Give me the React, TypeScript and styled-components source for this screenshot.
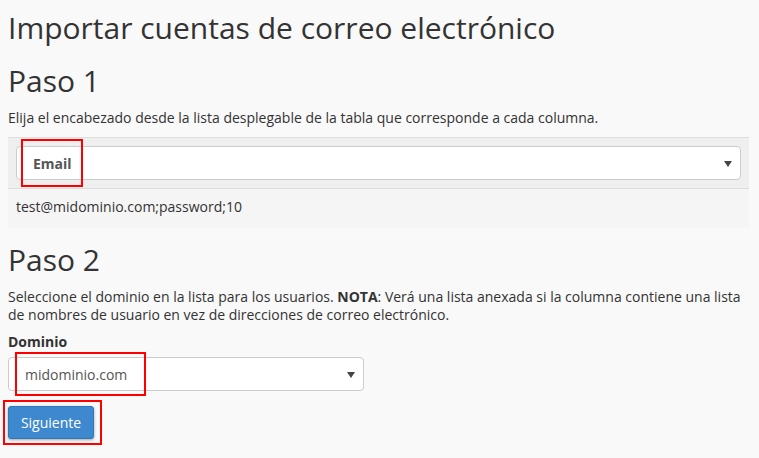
import React from "react";
import styled, { createGlobalStyle } from "styled-components";

const GlobalStyle = createGlobalStyle`
  html, body { margin: 0; padding: 0; }
  body {
    background: #f9f9f9;
    font-family: "Open Sans", "Liberation Sans", sans-serif;
    color: #333;
    font-size: 14px;
  }
`;

const Page = styled.div`
  padding: 0 10px 20px 8px;
`;

const Title = styled.h1`
  margin: 10px 0 0;
  font-size: 30px;
  font-weight: 400;
  line-height: 36px;
  color: #333;
`;

const StepTitle = styled.h2<{ $top: number }>`
  margin: ${(p) => p.$top}px 0 0;
  font-size: 30px;
  font-weight: 400;
  line-height: 36px;
  color: #333;
`;

const Text = styled.p<{ $top: number }>`
  margin: ${(p) => p.$top}px 0 0;
  font-size: 14px;
  line-height: 18px;
`;

const Table = styled.div`
  margin-top: 10px;
  border-top: 1px solid #dedede;
`;

const HeadRow = styled.div`
  background: #efefef;
  padding: 8px;
  border-bottom: 1px solid #dddddd;
`;

const BodyRow = styled.div`
  background: #f5f5f5;
  padding: 8px 8px 11px;
  font-size: 14px;
  line-height: 20px;
  color: #333;
`;

const SelectBox = styled.div<{ $width?: string; $bold?: boolean }>`
  position: relative;
  box-sizing: border-box;
  width: ${(p) => p.$width ?? "100%"};
  height: 34px;
  background: #fff;
  border: 1px solid #cccccc;
  border-radius: 4px;
  display: flex;
  align-items: center;
  justify-content: space-between;
  padding: 0 8px 0 16px;
  font-size: 14px;
  font-weight: ${(p) => (p.$bold ? 700 : 400)};
  color: #555;
`;

const Arrow = styled.span`
  width: 0;
  height: 0;
  border-left: 4px solid transparent;
  border-right: 4px solid transparent;
  border-top: 6px solid #444;
  margin-top: 1px;
`;

const Highlight = styled.span<{ $l: number; $t: number; $w: number; $h: number }>`
  position: absolute;
  left: ${(p) => p.$l}px;
  top: ${(p) => p.$t}px;
  width: ${(p) => p.$w}px;
  height: ${(p) => p.$h}px;
  box-sizing: border-box;
  border: 2px solid #ff0000;
  pointer-events: none;
  z-index: 2;
`;

const Label = styled.div`
  margin-top: 8px;
  font-weight: 700;
  font-size: 14px;
  line-height: 20px;
  color: #333;
`;

const Field = styled.div`
  margin-top: 5px;
`;

const ButtonWrap = styled.div`
  position: relative;
  display: block;
  width: fit-content;
  margin-top: 15px;
`;

const Button = styled.button`
  display: block;
  box-sizing: border-box;
  height: 33px;
  width: 86px;
  padding: 0;
  background: #3d88ce;
  border: 1px solid #2f78bd;
  border-radius: 3px;
  color: #fff;
  font-family: "Open Sans", "Liberation Sans", sans-serif;
  font-size: 14px;
  box-shadow: 0 1px 3px rgba(0, 0, 0, 0.35);
  cursor: pointer;
`;

export default function App() {
  return (
    <>
      <GlobalStyle />
      <Page>
        <Title>Importar cuentas de correo electrónico</Title>
        <StepTitle $top={17}>Paso 1</StepTitle>
        <Text $top={10}>
          Elija el encabezado desde la lista desplegable de la tabla que corresponde a cada columna.
        </Text>
        <Table>
          <HeadRow>
            <SelectBox $bold>
              <span>Email</span>
              <Arrow />
              <Highlight $l={4} $t={-8} $w={62} $h={48} />
            </SelectBox>
          </HeadRow>
          <BodyRow>test@midominio.com;password;10</BodyRow>
        </Table>
        <StepTitle $top={14}>Paso 2</StepTitle>
        <Text $top={10}>
          Seleccione el dominio en la lista para los usuarios. <strong>NOTA</strong>: Verá una lista anexada si la columna contiene una lista de nombres de usuario en vez de direcciones de correo electrónico.
        </Text>
        <Label>Dominio</Label>
        <Field>
          <SelectBox $width="356px">
            <span>midominio.com</span>
            <Arrow />
            <Highlight $l={6} $t={-6} $w={131} $h={44} />
          </SelectBox>
        </Field>
        <ButtonWrap>
          <Button>Siguiente</Button>
          <Highlight $l={-5} $t={-6} $w={99} $h={45} />
        </ButtonWrap>
      </Page>
    </>
  );
}
